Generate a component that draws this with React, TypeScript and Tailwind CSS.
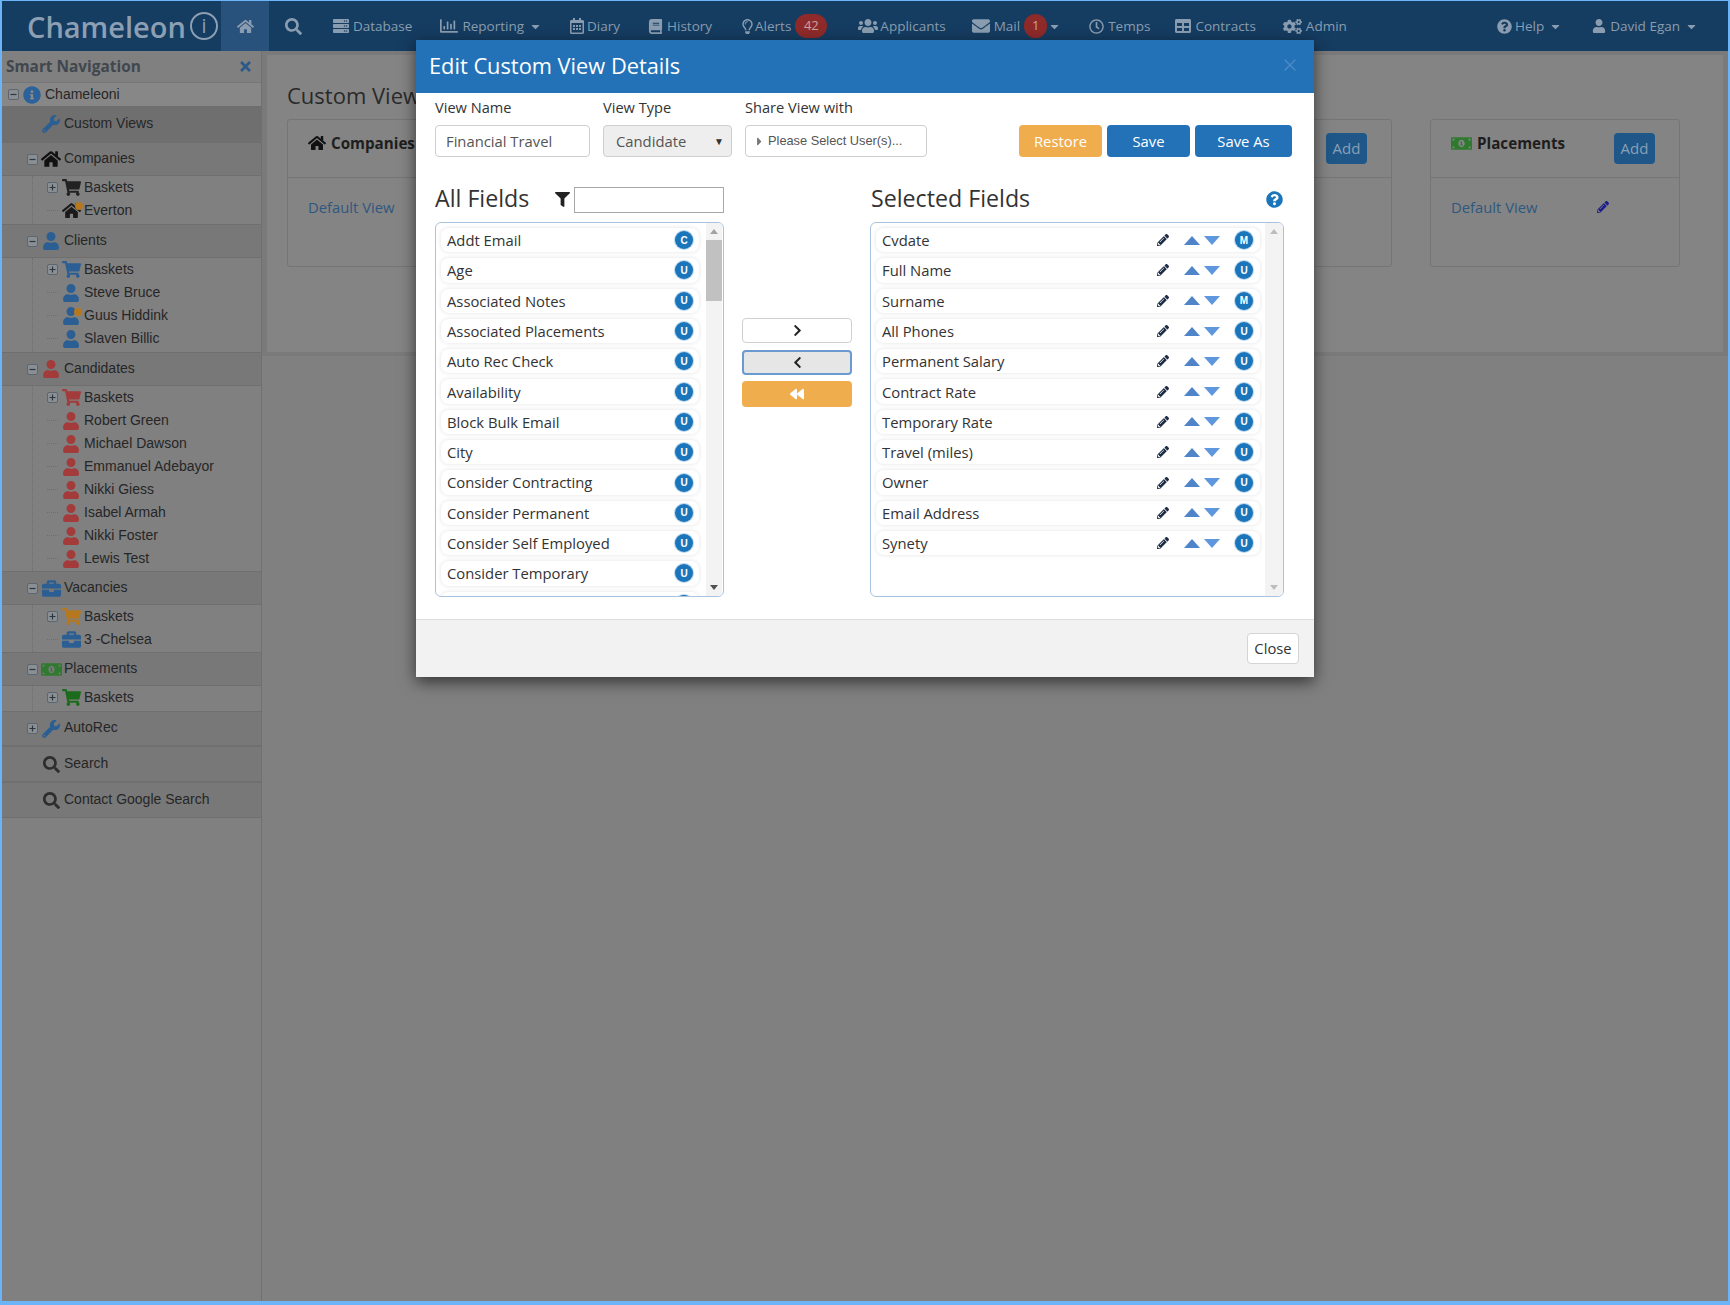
import React from "react";
import {
  FaHome, FaSearch, FaUser, FaShoppingCart, FaBriefcase, FaWrench, FaMoneyBillAlt, FaTimes, FaFilter, FaPencilAlt,
  FaChevronRight, FaChevronLeft, FaBackward, FaQuestionCircle, FaRegCalendarAlt, FaBook, FaRegLightbulb, FaUsers,
  FaEnvelope, FaRegClock, FaTable, FaCogs, FaCaretDown, FaInfoCircle, FaRegChartBar, FaServer, FaCaretRight,
} from "react-icons/fa";
import { X } from "lucide-react";

const open = "font-['Open_Sans',sans-serif]";

function NavItem({ icon, label, cls, after }: { icon: React.ReactNode; label: string; cls: string; after?: React.ReactNode }) {
  return (
    <div className={"flex items-center h-full gap-[4px] " + cls}>
      {icon}
      <span>{label}</span>
      {after}
    </div>
  );
}
const Caret = ({ cls = "ml-[1px]" }: { cls?: string }) => <FaCaretDown className={"text-[13px] " + cls} />;
const NavBadge = ({ children, cls }: { children: React.ReactNode; cls: string }) => (
  <span className={"h-[24px] flex items-center justify-center rounded-full bg-[#8f2a2a] text-[13px] text-[#c9a2a2] " + cls}>{children}</span>
);

function Navbar() {
  return (
    <div className={"h-[50px] bg-[#153c61] flex items-center shrink-0 text-[13.5px] text-[#8a9db0] " + open}>
      <div className="w-[219px] h-full flex items-center pl-[25px] text-[#8c9fb3] shrink-0">
        <span className="text-[29px] font-semibold leading-none">Chameleon</span>
        <span className="ml-[4px] w-[28px] h-[28px] shrink-0 rounded-full border-2 border-[#8c9fb3] flex items-center justify-center text-[20px] leading-none font-normal">i</span>
      </div>
      <div className="w-[48px] h-full bg-[#28517b] flex items-center justify-center shrink-0"><FaHome className="text-[17px]" /></div>
      <FaSearch className="text-[17px] ml-[16px]" />
      <NavItem cls="ml-[31px]" icon={<FaServer className="text-[16px]" />} label="Database" />
      <NavItem cls="ml-[28px]" icon={<FaRegChartBar className="text-[18px]" />} label="Reporting" after={<Caret />} />
      <NavItem cls="ml-[27px]" icon={<FaRegCalendarAlt className="text-[16px] -mr-[2px]" />} label="Diary" />
      <NavItem cls="ml-[28px]" icon={<FaBook className="text-[15px]" />} label="History" />
      <NavItem cls="ml-[28px]" icon={<FaRegLightbulb className="text-[15px] -mr-[4px]" />} label="Alerts" after={<NavBadge cls="w-[32px]">42</NavBadge>} />
      <NavItem cls="ml-[31px]" icon={<FaUsers className="text-[20px] -mr-[2px]" />} label="Applicants" />
      <NavItem cls="ml-[26px]" icon={<FaEnvelope className="text-[18px]" />} label="Mail" after={<><NavBadge cls="w-[23px]">1</NavBadge><Caret cls="-ml-[3px]" /></>} />
      <NavItem cls="ml-[28px]" icon={<FaRegClock className="text-[15px]" />} label="Temps" />
      <NavItem cls="ml-[25px]" icon={<FaTable className="text-[16px]" />} label="Contracts" />
      <NavItem cls="ml-[27px]" icon={<FaCogs className="text-[19px]" />} label="Admin" />
      <div className="ml-auto flex items-center h-full pr-[30px]">
        <NavItem cls="" icon={<FaQuestionCircle className="text-[15px] -mr-[1px]" />} label="Help" after={<Caret />} />
        <NavItem cls="ml-[30px]" icon={<FaUser className="text-[14px]" />} label="David Egan" after={<Caret />} />
      </div>
    </div>
  );
}

function Box({ plus }: { plus?: boolean }) {
  return (
    <svg width="11" height="11" viewBox="0 0 11 11" className="shrink-0">
      <rect x="0.5" y="0.5" width="10" height="10" rx="1.5" fill="#8a8f94" stroke="#5c6670" />
      <path d={plus ? "M2.5 5.5h6M5.5 2.5v6" : "M2.5 5.5h6"} stroke="#2c3640" strokeWidth="1.2" />
    </svg>
  );
}

const treeText = "font-['Liberation_Sans',sans-serif] text-[14px] text-[#262626] whitespace-nowrap";

function Row({ cls, pad, box, icon, text, lift }: { cls: string; pad: string; box?: "plus" | "minus" | "none"; icon: React.ReactNode; text: string; lift?: boolean }) {
  return (
    <div className={"flex items-center " + cls + " " + pad}>
      {box === "none" ? <span className="w-[11px] shrink-0" /> : <Box plus={box === "plus"} />}
      <span className="w-[26px] flex justify-center shrink-0">{icon}</span>
      <span className={treeText + (lift ? " -mt-[2px]" : "")}>{text}</span>
    </div>
  );
}

type Sub = { t: string; icon: React.ReactNode; box?: "plus" };
function Group({ name, icon, subs, box = "minus", h = "h-[34px]", pb = "pb-[1px]" }: { name: string; icon: React.ReactNode; subs?: Sub[]; box?: "plus" | "minus" | "none"; h?: string; pb?: string }) {
  return (
    <div>
      <Row cls={h + " bg-[#787878] border-y border-[#6f6f6f]"} pad="pl-[25px]" box={box} icon={icon} text={name} lift />
      {subs && (
        <div className={"ml-[30px] border-l border-dotted border-[#6e6e6e] " + pb}>
          {subs.map((s, i) => (
            <div key={i} className="h-[23px] flex items-center pl-[14px]">
              {s.box ? <Box plus /> : <span className="w-[11px] shrink-0 border-t border-dotted border-[#6e6e6e]" />}
              <span className="w-[26px] flex justify-center shrink-0">{s.icon}</span>
              <span className={treeText}>{s.t}</span>
            </div>
          ))}
        </div>
      )}
    </div>
  );
}

const blue = "#2b5f93";
const red = "#a33b3b";
const U = (c: string) => <FaUser className="text-[18px]" style={{ color: c }} />;
const Cart = (c: string) => <FaShoppingCart className="text-[19px]" style={{ color: c }} />;
const Brief = <FaBriefcase className="text-[19px] text-[#2b5f93]" />;
const Money = <FaMoneyBillAlt className="text-[21px] text-[#2f7a2f]" />;
const Spot = ({ children }: { children: React.ReactNode }) => (
  <span className="relative flex">
    {children}
    <span className="absolute right-[-2px] top-[1px] w-[8px] h-[8px] rounded-full bg-[#b5781f]" />
  </span>
);

function Sidebar() {
  return (
    <div className="w-[260px] shrink-0 border-r border-[#707070] bg-[#808080]">
      <div className={"h-[32px] flex items-center justify-between pl-[4px] pr-[8px] border-b border-[#767676] " + open}>
        <span className="text-[15.4px] font-bold text-[#41474e]">Smart Navigation</span>
        <FaTimes className="text-[15px] text-[#2c5a88]" />
      </div>
      <Row cls="h-[23px] bg-[#878787]" pad="pl-[6px]" icon={<FaInfoCircle className="text-[18px] text-[#2b6299]" />} text="Chameleoni" />
      <Row cls="h-[36px] bg-[#6f6f6f]" pad="pl-[25px]" box="none" icon={<FaWrench className="text-[18px] text-[#2b5f93]" />} text="Custom Views" lift />
      <Group name="Companies" pb="pb-[2px]" icon={<FaHome className="text-[20px] text-[#111]" />} subs={[
        { t: "Baskets", box: "plus", icon: Cart("#222") },
        { t: "Everton", icon: <Spot><FaHome className="text-[19px] text-[#1a1a1a]" /></Spot> },
      ]} />
      <Group name="Clients" pb="pb-[2px]" icon={U(blue)} subs={[
        { t: "Baskets", box: "plus", icon: Cart(blue) },
        { t: "Steve Bruce", icon: U(blue) },
        { t: "Guus Hiddink", icon: <Spot>{U(blue)}</Spot> },
        { t: "Slaven Billic", icon: U(blue) },
      ]} />
      <Group name="Candidates" icon={U(red)} subs={[
        { t: "Baskets", box: "plus", icon: Cart(red) },
        ...["Robert Green", "Michael Dawson", "Emmanuel Adebayor", "Nikki Giess", "Isabel Armah", "Nikki Foster", "Lewis Test"].map((t) => ({ t, icon: U(red) })),
      ]} />
      <Group name="Vacancies" icon={Brief} subs={[
        { t: "Baskets", box: "plus", icon: Cart("#b5781f") },
        { t: "3 -Chelsea", icon: Brief },
      ]} />
      <Group name="Placements" pb="pb-[2px]" icon={Money} subs={[{ t: "Baskets", box: "plus", icon: Cart("#1c6b1c") }]} />
      <Group name="AutoRec" box="plus" h="h-[35px]" icon={<FaWrench className="text-[18px] text-[#2b5f93]" />} />
      <Group name="Search" box="none" h="h-[36px]" icon={<FaSearch className="text-[17px] text-[#2d2d2d]" />} />
      <Group name="Contact Google Search" box="none" h="h-[36px]" icon={<FaSearch className="text-[17px] text-[#2d2d2d]" />} />
    </div>
  );
}

function BackCard({ title, icon, cls }: { title: string; icon: React.ReactNode; cls: string }) {
  return (
    <div className={"h-[148px] border border-[#757575] rounded-[3px] " + cls}>
      <div className="h-[58px] border-b border-[#757575] flex pl-[20px] pr-[24px] pt-[13px] justify-between">
        <div className="flex items-center h-[20px] gap-[5px] font-bold text-[15.2px] text-[#1e1e1e]">{icon}<span>{title}</span></div>
        <div className="w-[41px] h-[31px] rounded-[4px] bg-[#1e5788] text-[#8aa0b5] text-[15px] flex items-center justify-center">Add</div>
      </div>
      <div className="flex items-center pl-[20px] pt-[18px] text-[14.8px] text-[#2f587f]">
        <span className="w-[146px]">Default View</span>
        <FaPencilAlt className="text-[12px] text-[#1c1c8c]" />
      </div>
    </div>
  );
}

function Main() {
  return (
    <div className={"flex-1 " + open}>
      <div className="h-[305px] border-x-[5px] border-y-[4px] border-[#7a7a7a] bg-[#848484] pl-[20px] pr-[43px] pt-[25px]">
        <div className="text-[22px] leading-[30px] text-[#2a2a2a]">Custom Views</div>
        <div className="flex gap-[38px] mt-[9px]">
          <BackCard cls="flex-1" title="Companies" icon={<FaHome className="text-[18px] text-[#111]" />} />
          <BackCard cls="w-[250px]" title="Placements" icon={<FaMoneyBillAlt className="text-[21px] text-[#2f7a2f]" />} />
        </div>
      </div>
    </div>
  );
}

function Badge({ l }: { l: string }) {
  return (
    <span className="w-[18px] h-[18px] rounded-full bg-[#1b75bb] shadow-[0_0_0_1px_#b9d6ee] text-white text-[10px] font-bold flex items-center justify-center shrink-0 font-['Liberation_Sans',sans-serif]">{l}</span>
  );
}

function Tri({ down }: { down?: boolean }) {
  return (
    <svg width="16" height="9" viewBox="0 0 16 9" className="shrink-0">
      <polygon points={down ? "0,0 16,0 8,9" : "8,0 16,9 0,9"} fill={down ? "#5f97df" : "#4f84c8"} />
    </svg>
  );
}

const itemCls = "h-[24.3px] rounded-[8px] bg-white shadow-[0_0_4px_#e2e2e2] flex items-center text-[14.8px] text-[#333] shrink-0";

function Scroll({ thumb, w }: { thumb?: boolean; w: string }) {
  return (
    <div className={"bg-[#f3f3f3] flex flex-col items-center shrink-0 " + w}>
      <svg width="8" height="5" viewBox="0 0 8 5" className="mt-[6px] mb-[6px] shrink-0"><polygon points="4,0 8,5 0,5" fill={thumb ? "#a3a3a3" : "#bdbdbd"} /></svg>
      {thumb && <div className="w-full h-[61px] bg-[#c1c1c1]" />}
      <svg width="8" height="5" viewBox="0 0 8 5" className="mt-auto mb-[6px] shrink-0"><polygon points="0,0 8,0 4,5" fill={thumb ? "#505050" : "#bdbdbd"} /></svg>
    </div>
  );
}

const allFields: [string, string][] = [
  ["Addt Email", "C"], ["Age", "U"], ["Associated Notes", "U"], ["Associated Placements", "U"], ["Auto Rec Check", "U"], ["Availability", "U"],
  ["Block Bulk Email", "U"], ["City", "U"], ["Consider Contracting", "U"], ["Consider Permanent", "U"], ["Consider Self Employed", "U"], ["Consider Temporary", "U"], ["", ""],
];
const selFields: [string, string][] = [
  ["Cvdate", "M"], ["Full Name", "U"], ["Surname", "M"], ["All Phones", "U"], ["Permanent Salary", "U"], ["Contract Rate", "U"], ["Temporary Rate", "U"],
  ["Travel (miles)", "U"], ["Owner", "U"], ["Email Address", "U"], ["Synety", "U"],
];

const listBox = "h-[375px] border border-[#a9c3df] rounded-[6px] overflow-hidden flex";
const heading = "text-[23.2px] leading-none text-[#333] -mt-[3px]";
const label = "h-[20px] text-[14.6px] leading-[20px] text-[#333]";
const ctl = "h-[32px] border border-[#cfcfcf] rounded-[4px] flex items-center text-[14.8px] text-[#555]";
const btn = "h-[32px] rounded-[4px] text-white text-[14.8px] flex items-center justify-center";

function Modal() {
  return (
    <div className={"absolute left-[414px] top-[39px] w-[898px] bg-white shadow-[0_5px_15px_rgba(0,0,0,0.6)] " + open}>
      <div className="h-[53px] bg-[#2372b8] flex items-center justify-between pl-[13px] pr-[14px]">
        <span className="text-[21.8px] text-white">Edit Custom View Details</span>
        <X size={20} strokeWidth={1.5} className="text-[#4f8cc6] -mt-[3px]" />
      </div>
      <div className="pl-[19px] pr-[22px] pt-[4px] pb-[22px]">
        <div className="flex items-end">
          <div className="w-[155px]"><div className={label}>View Name</div><div className={ctl + " mt-[8px] px-[10px]"}>Financial Travel</div></div>
          <div className="w-[129px] ml-[13px]"><div className={label}>View Type</div><div className={ctl + " mt-[8px] pl-[12px] pr-[7px] bg-[#eee] justify-between"}>Candidate<span className="text-[10px] text-[#333]">▼</span></div></div>
          <div className="w-[182px] ml-[13px]"><div className={label}>Share View with</div><div className={ctl + " mt-[8px] pl-[7px] gap-[2px]"}><FaCaretRight className="text-[13px] text-[#777]" /><span className="text-[12.8px] font-['Liberation_Sans',sans-serif]">Please Select User(s)...</span></div></div>
          <div className="ml-auto flex gap-[5px]">
            <div className={btn + " w-[83px] bg-[#f0ad4e]"}>Restore</div>
            <div className={btn + " w-[83px] bg-[#2372b8]"}>Save</div>
            <div className={btn + " w-[97px] bg-[#2372b8]"}>Save As</div>
          </div>
        </div>
        <div className="grid grid-cols-[289px_110px_414px] gap-x-[18px] mt-[30px]">
          <div className="h-[26px] flex items-center">
            <span className={heading}>All Fields</span>
            <FaFilter className="ml-auto mr-[4px] text-[15px] text-[#222] -mt-[2px]" />
            <div className="w-[150px] h-[26px] border border-[#a8a8a8]" />
          </div>
          <div />
          <div className="h-[26px] flex items-center justify-between pr-[1px]">
            <span className={heading + " ml-[1px]"}>Selected Fields</span>
            <FaQuestionCircle className="text-[17px] text-[#1b75bb] -mt-[2px]" />
          </div>
          <div className={listBox + " mt-[9px]"}>
            <div className="flex-1 flex flex-col gap-[6px] pt-[5px] pl-[5px] pr-[7px] min-w-0">
              {allFields.map(([t, b], i) => (
                <div key={i} className={itemCls + " pl-[6px] pr-[6px] justify-between"}><span>{t}</span><Badge l={b} /></div>
              ))}
            </div>
            <Scroll thumb w="w-[16px] mr-[1px]" />
          </div>
          <div className="flex flex-col gap-[7px] items-stretch pt-[105px]">
            <div className="h-[25px] border border-[#d0d0d0] rounded-[4px] flex items-center justify-center"><FaChevronRight className="text-[13px] text-[#222]" /></div>
            <div className="h-[25px] border-2 border-[#6b9ad0] bg-[#e6e6e6] rounded-[4px] flex items-center justify-center"><FaChevronLeft className="text-[13px] text-[#222]" /></div>
            <div className="h-[26px] -mt-[1px] bg-[#f0ad4e] rounded-[4px] flex items-center justify-center"><FaBackward className="text-[14px] text-white" /></div>
          </div>
          <div className={listBox + " mt-[9px]"}>
            <div className="flex-1 flex flex-col gap-[6px] pt-[5px] pl-[5px] pr-[5px] min-w-0">
              {selFields.map(([t, b], i) => (
                <div key={i} className={itemCls + " pl-[6px] pr-[7px]"}>
                  <span className="flex-1">{t}</span>
                  <FaPencilAlt className="text-[12px] text-[#1d2c45] mr-[15px]" />
                  <Tri />
                  <span className="w-[4px]" />
                  <Tri down />
                  <span className="w-[15px]" />
                  <Badge l={b} />
                </div>
              ))}
            </div>
            <Scroll w="w-[18px]" />
          </div>
        </div>
      </div>
      <div className="h-[58px] bg-[#f2f2f2] border-t border-[#dedede] flex justify-end items-start pt-[13px] pr-[15px]">
        <div className="w-[52px] h-[31px] bg-white border border-[#d4d4d4] rounded-[4px] text-[14.8px] text-[#333] flex items-center justify-center">Close</div>
      </div>
    </div>
  );
}

export default function App() {
  return (
    <div className="w-[1730px] h-[1305px] bg-[#6cb4f8] pt-px pb-[4px] px-[2px]">
      <div className="relative w-full h-full bg-[#808080] flex flex-col overflow-hidden">
        <Navbar />
        <div className="flex-1 flex min-h-0">
          <Sidebar />
          <Main />
        </div>
        <Modal />
      </div>
    </div>
  );
}
